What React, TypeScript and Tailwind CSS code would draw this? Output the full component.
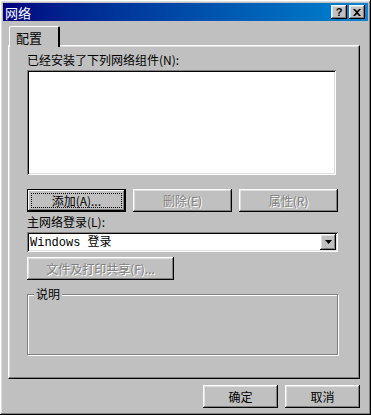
import React from "react";

const raised =
  "shadow-[inset_-1px_-1px_#000,inset_1px_1px_#fff,inset_-2px_-2px_#808080,inset_2px_2px_#dfdfdf]";
const sunken =
  "shadow-[inset_1px_1px_#808080,inset_-1px_-1px_#fff,inset_2px_2px_#000,inset_-2px_-2px_#dfdfdf]";
const disabledText = "text-[#808080] [text-shadow:1px_1px_0_#fff]";

const Button: React.FC<{
  label: string;
  w: string;
  disabled?: boolean;
  focused?: boolean;
}> = ({ label, w, disabled, focused }) => (
  <div
    className={`${w} h-[23px] relative flex items-center justify-center bg-[#c0c0c0] ${
      focused
        ? "shadow-[inset_0_0_0_1px_#000,inset_-2px_-2px_#000,inset_2px_2px_#fff,inset_-3px_-3px_#808080]"
        : raised
    }`}
  >
    {focused && (
      <div className="absolute inset-x-[4px] inset-y-[4px] border border-dotted border-black" />
    )}
    <span className={`px-1 leading-[14px] ${disabled ? disabledText : "text-black"}`}>
      {label}
    </span>
  </div>
);

export default function App() {
  return (
    <div
      className={`w-[371px] h-[415px] bg-[#c0c0c0] p-[3px] flex flex-col text-[12px] text-black ${raised}`}
      style={{ fontFamily: '"Noto Sans CJK SC", "Liberation Sans", sans-serif' }}
    >
      {/* Title bar */}
      <div className="h-[18px] flex items-center justify-between pl-[2px] pr-[3px] bg-gradient-to-r from-[#000080] to-[#1084d0]">
        <span className="text-white text-[13px] leading-none">网络</span>
        <div className="flex gap-[2px]">
          <div className={`w-[16px] h-[14px] bg-[#c0c0c0] flex items-center justify-center ${raised}`}>
            <span className="text-[11px] font-bold leading-none" style={{ fontFamily: '"Liberation Sans", sans-serif' }}>?</span>
          </div>
          <div className={`w-[16px] h-[14px] bg-[#c0c0c0] flex items-center justify-center ${raised}`}>
            <svg width="8" height="7" viewBox="0 0 8 7">
              <path d="M0 0h2l2 2 2-2h2L5 3.5 8 7H6L4 5 2 7H0l3-3.5z" fill="#000" />
            </svg>
          </div>
        </div>
      </div>

      {/* Tab strip */}
      <div className="flex pl-[6px] mt-[5px] relative z-10">
        <div className="w-[51px] h-[21px] bg-[#c0c0c0] border-l border-t border-white border-r-2 border-r-[#000] rounded-tl-[2px] rounded-tr-[2px] flex items-start pt-[3px] pl-[6px] -mb-[2px]">
          <span className="text-[13px] leading-[15px]">配置</span>
        </div>
      </div>

      {/* Panel */}
      <div className="ml-[5px] mr-[8px] h-[334px] bg-[#c0c0c0] border-l border-t border-white border-r border-b border-r-black border-b-black shadow-[inset_-1px_-1px_#808080,inset_1px_1px_#dfdfdf] pl-[18px] pr-[21px] pt-[7px] flex flex-col">
        <div className="leading-[14px]">已经安装了下列网络组件(N):</div>
        <div className={`mt-[3px] w-[309px] h-[105px] bg-white ${sunken}`} />

        <div className="mt-[14px] flex gap-[7px]">
          <Button label="添加(A)..." w="w-[99px]" focused />
          <Button label="删除(E)" w="w-[100px]" disabled />
          <Button label="属性(R)" w="w-[99px]" disabled />
        </div>

        <div className="mt-[2px] leading-[15px]">主网络登录(L):</div>
        <div className={`mt-[3px] w-[311px] h-[20px] bg-white flex items-center justify-between pl-[3px] pr-[2px] ${sunken}`}>
          <span className="text-[12px] leading-none">
            <span style={{ fontFamily: '"Liberation Mono", monospace' }}>Windows </span>登录
          </span>
          <div className={`w-[16px] h-[16px] bg-[#c0c0c0] flex items-center justify-center ${raised}`}>
            <svg width="7" height="4" viewBox="0 0 7 4">
              <path d="M0 0h7L3.5 4z" fill="#000" />
            </svg>
          </div>
        </div>

        <div className="mt-[5px]">
          <Button label="文件及打印共享(F)..." w="w-[147px]" disabled />
        </div>

        <div className="mt-[14px] relative w-[311px] h-[61px] border border-[#808080] shadow-[1px_1px_#fff,inset_1px_1px_#fff]">
          <span className="absolute -top-[8px] left-[6px] px-[2px] bg-[#c0c0c0] leading-[14px]">说明</span>
        </div>
      </div>

      {/* Footer buttons */}
      <div className="mt-[6px] flex justify-end gap-[7px] pr-[8px]">
        <Button label="确定" w="w-[75px]" />
        <Button label="取消" w="w-[75px]" />
      </div>
    </div>
  );
}
